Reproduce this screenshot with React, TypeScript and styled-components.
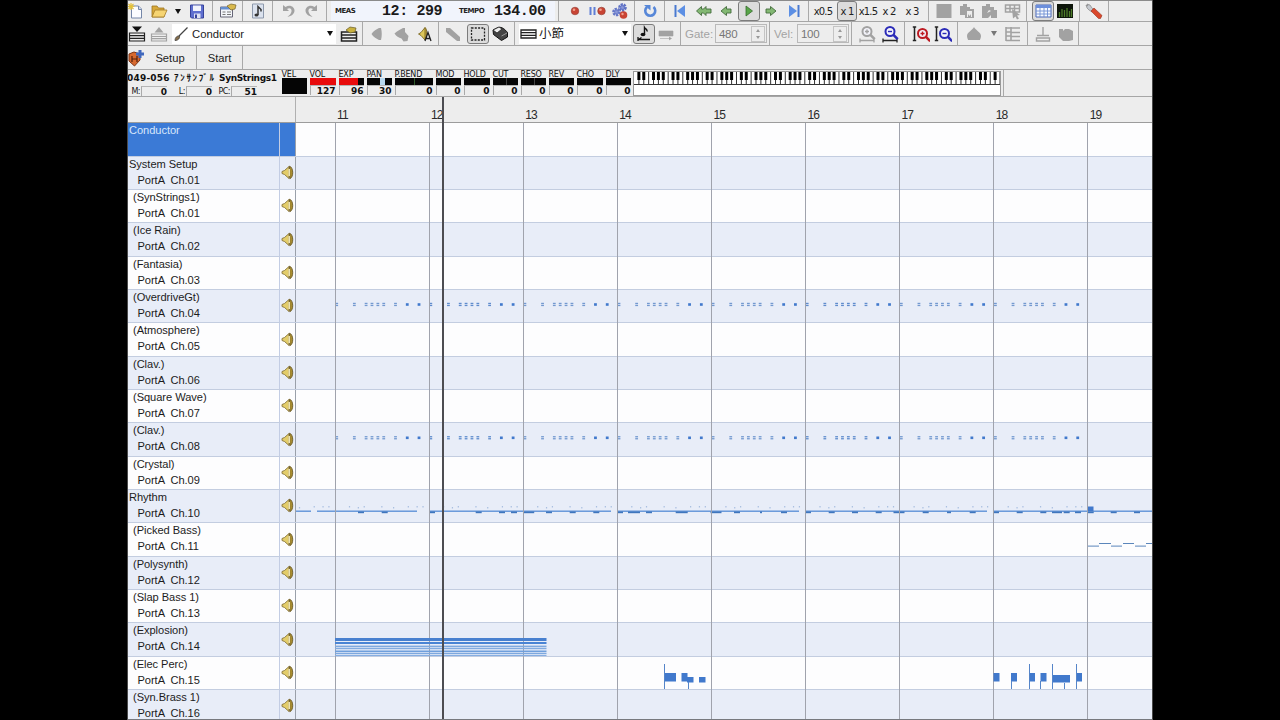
import React from 'react';
import styled, { createGlobalStyle, css } from 'styled-components';

const GlobalStyle = createGlobalStyle`
  * { box-sizing: border-box; }
  body { margin: 0; background: #000; }
`;

const uiFont = '"Liberation Sans", "Noto Sans CJK JP", sans-serif';
const wideFont = '"DejaVu Sans", "Noto Sans CJK JP", sans-serif';

const Screen = styled.div`
  width: 1280px;
  height: 720px;
  overflow: hidden;
  display: flex;
  justify-content: center;
  background: #000;
  font-family: ${uiFont};
  color: #1c1c1c;
`;

const Frame = styled.div`
  position: relative;
`;

const Window = styled.div`
  width: 1026px;
  height: 720px;
  display: flex;
  flex-direction: column;
  background: #ededed;
  border-left: 1px solid #4a4a4a;
  border-right: 1px solid #4a4a4a;
  border-bottom: 1px solid #77797e;
  overflow: hidden;
`;

const Bar = styled.div<{ $h: number; $top?: boolean }>`
  height: ${p => p.$h}px;
  flex: none;
  display: flex;
  align-items: center;
  border-bottom: 1px solid #a6a6a6;
  ${p => p.$top && css`border-top: 1px solid #8b8b8b;`}
`;

const Tool = styled.div<{ $w: number; $on?: boolean; $ml?: number }>`
  width: ${p => p.$w}px;
  height: 20px;
  margin-left: ${p => p.$ml ?? 0}px;
  flex: none;
  display: flex;
  align-items: center;
  justify-content: center;
  ${p => p.$on && css`
    background: #dcdcdc;
    border: 1.5px solid #7c7c7c;
    border-radius: 3px;
  `}
`;

const Sep = styled.div<{ $ml?: number; $mr?: number }>`
  width: 1px;
  height: 100%;
  flex: none;
  margin-left: ${p => p.$ml ?? 0}px;
  margin-right: ${p => p.$mr ?? 0}px;
  background: #a9a9a9;
`;

const Icon = styled.svg`
  width: 18px;
  height: 18px;
  flex: none;
  display: block;
`;

const Speed = styled.span`
  font: 10px ${wideFont};
  letter-spacing: -0.8px;
  white-space: pre;
  color: #222;
`;

const Display = styled.div`
  width: 224px;
  height: 100%;
  background: #f1f4fc;
  display: flex;
  align-items: center;
  flex: none;
  padding-left: 4px;
`;

const DisplayLabel = styled.span<{ $w: number }>`
  width: ${p => p.$w}px;
  font: bold 7px ${wideFont};
  letter-spacing: -0.5px;
  color: #222;
`;

const DisplayValue = styled.span<{ $w: number }>`
  width: ${p => p.$w}px;
  font: bold 15px "Liberation Mono", monospace;
  letter-spacing: -0.4px;
  white-space: pre;
  color: #1a1a1a;
`;

const Combo = styled.div<{ $w: number; $ml?: number }>`
  width: ${p => p.$w}px;
  height: 20px;
  margin-left: ${p => p.$ml ?? 0}px;
  background: #fff;
  display: flex;
  align-items: center;
  flex: none;
  padding: 0 3px 0 1px;
  font-size: 11.3px;
  line-height: 20px;
`;

const ComboText = styled.span<{ $large?: boolean }>`
  flex: 1;
  padding-left: 1px;
  white-space: nowrap;
  ${p => p.$large && css`font-size: 12.5px;`}
`;

const Arrow = styled.i<{ $c?: string }>`
  width: 0;
  height: 0;
  flex: none;
  border: 3.5px solid transparent;
  border-top: 5px solid ${p => p.$c ?? '#111'};
  border-bottom: 0;
`;

const FieldLabel = styled.span<{ $w: number }>`
  width: ${p => p.$w}px;
  padding-left: 4px;
  font-size: 11.5px;
  color: #a3a3a3;
  flex: none;
`;

const Field = styled.div`
  width: 52px;
  height: 19px;
  border: 1px solid #b9b9b9;
  display: flex;
  align-items: center;
  justify-content: space-between;
  padding: 0 1px 0 3px;
  font-size: 11.5px;
  line-height: 16px;
  letter-spacing: -0.3px;
  color: #777;
  flex: none;
`;

const Spinner = styled.div`
  width: 14px;
  height: 16px;
  display: flex;
  flex-direction: column;
  align-items: center;
  justify-content: space-around;
  border: 1px solid #c4c4c4;
`;

const SpinArrow = styled.i<{ $up?: boolean }>`
  border: 2.5px solid transparent;
  ${p => p.$up
    ? css`border-bottom: 3px solid #999; border-top: 0;`
    : css`border-top: 3px solid #999; border-bottom: 0;`}
`;

const TextButton = styled.span<{ $w: number }>`
  width: ${p => p.$w}px;
  text-align: center;
  font-size: 11.2px;
  flex: none;
`;

const Patch = styled.div`
  width: 154px;
  height: 100%;
  display: flex;
  flex-direction: column;
  flex: none;
  color: #111;
`;

const PatchName = styled.div`
  display: flex;
  height: 16px;
  align-items: center;
  margin-left: -1px;
  font: bold 9px/16px ${wideFont};
  white-space: nowrap;
`;

const PatchPart = styled.span<{ $w: number; $ls: number }>`
  width: ${p => p.$w}px;
  letter-spacing: ${p => p.$ls}px;
`;

const PatchValues = styled.div`
  display: flex;
  font: 8px/10px ${wideFont};
`;

const PatchLabel = styled.span<{ $w: number }>`
  width: ${p => p.$w}px;
  text-align: right;
  padding-right: 1px;
  letter-spacing: -0.5px;
  line-height: 11px;
`;

const Value = styled.span<{ $w?: number }>`
  ${p => (p.$w ? css`width: ${p.$w}px;` : '')}
  height: 10px;
  font: bold 9px/10px ${wideFont};
  text-align: right;
  border-left: 1px solid #aaa;
  border-top: 1px solid #b5b5b5;
  color: #111;
`;

const Meters = styled.div`
  display: flex;
  gap: 3px;
  height: 100%;
  padding-top: 1px;
  margin-left: -0.5px;
  flex: none;
`;

const Meter = styled.div<{ $w: number }>`
  width: ${p => p.$w}px;
  display: flex;
  flex-direction: column;
`;

const MeterLabel = styled.span`
  height: 7px;
  font: 8px/8px ${wideFont};
  letter-spacing: -0.2px;
  white-space: nowrap;
  color: #111;
`;

const MeterBar = styled.div<{ $h: number }>`
  height: ${p => p.$h}px;
  background: #050505;
  display: flex;
`;

const MeterFill = styled.div<{ $from: number; $w: number; $c: string }>`
  margin-left: ${p => p.$from}px;
  width: ${p => p.$w}px;
  background: ${p => p.$c};
`;

const Piano = styled.div`
  width: 368px;
  height: 25px;
  margin-left: 2.5px;
  background: #fff;
  border: 1px solid #9a9a9a;
  flex: none;
`;

const Ruler = styled.div`
  height: 26px;
  flex: none;
  display: flex;
  border-bottom: 1px solid #9c9c9c;
`;

const RulerCorner = styled.div`
  width: 168px;
  flex: none;
  border-right: 1px solid #b0b0b0;
`;

const RulerMarks = styled.div`
  display: flex;
  padding-left: 41px;
  overflow: hidden;
`;

const Mark = styled.span`
  width: 94.1px;
  flex: none;
  font-size: 12px;
  line-height: 37px;
  letter-spacing: -0.9px;
  color: #2a2a2a;
`;

const Workspace = styled.div`
  position: relative;
  flex: 1;
  min-height: 0;
  overflow: hidden;
`;

const Track = styled.div<{ $h: number; $alt: boolean }>`
  height: ${p => p.$h}px;
  display: flex;
  background: ${p => (p.$alt ? '#e8edf8' : '#fdfdfe')};
  border-bottom: 1px solid #c3cde0;
`;

const TrackInfo = styled.div<{ $selected?: boolean }>`
  width: 152px;
  height: 100%;
  border-right: 1px solid #c3cde4;
  padding-left: 1px;
  font-size: 11.1px;
  letter-spacing: -0.05px;
  line-height: 15.500px;
  white-space: pre;
  overflow: hidden;
  ${p => p.$selected && css`background: #3b7ad6; color: #d8e6fb;`}
`;

const TrackName = styled.div<{ $inset: boolean }>`
  padding-left: ${p => (p.$inset ? 4 : 0)}px;
`;

const TrackPort = styled.div`
  padding-left: 8.5px;
`;

const TrackMute = styled.div<{ $selected?: boolean }>`
  width: 16px;
  height: 100%;
  display: flex;
  align-items: center;
  justify-content: center;
  padding-bottom: 1px;
  border-right: 1px solid #9aa0aa;
  ${p => p.$selected && css`background: #3b7ad6;`}
`;

const Roll = styled.svg`
  position: absolute;
  left: 167px;
  top: 0;
  display: block;
`;

const Playhead = styled.div`
  position: absolute;
  left: 315px;
  top: 97px;
  width: 1.5px;
  height: 622px;
  background: #4d4d52;
`;

const GRAY = '#a2a2a2';

const icons: Record<string, React.ReactNode> = {
  newFile: <><path d="M4.500 4h7l3 3v9h-10z" fill="#fbfcff" stroke="#7486a8" /><path d="M11.500 4v3.500h3" fill="#cfdaf0" stroke="#7486a8" /><path d="M4 1v7M.5 4.500h7M1.500 2l5 5M6.500 2l-5 5" stroke="#e3c13c" strokeWidth="1.200" /></>,
  open: <><path d="M2 4h5l1.500 2H14v9H2z" fill="#d8a93a" stroke="#9c7420" strokeWidth=".8" /><path d="M2 15l3-7h12l-3 7z" fill="#f6d472" stroke="#a27a26" strokeWidth=".8" /></>,
  save: <><path d="M2.500 3h13v13h-12l-1-1z" fill="#5f6fcf" stroke="#36429a" /><path d="M5 3.500h8v5.500H5z" fill="#f1f3fb" /><path d="M6 11.500h6.500V16H6z" fill="#dfe3f2" /><path d="M7 12.500h2V16H7z" fill="#36429a" /></>,
  props: <><path d="M1.500 5h12v10h-12z" fill="#f4f6fa" stroke="#667" /><path d="M1.500 5h12v2.500h-12z" fill="#668fcf" /><path d="M3.500 10h3M8 10h4M3.500 12.500h3M8 12.500h4" stroke="#777" /><path d="M8 4l4-2 5 1-1 4-4 1z" fill="#d9b94c" stroke="#77642a" strokeWidth=".7" /></>,
  song: <><path d="M3.500 2h11v14h-11z" fill="#dbe2ee" stroke="#8d99ac" /><path d="M9 13V4.500l3 3v2" fill="none" stroke="#333" strokeWidth="1.500" /><ellipse cx="7.500" cy="13" rx="2" ry="1.600" fill="#333" /></>,
  undo: <path d="M3 3v6h6L7 7c3-2 5 0 4.500 2.500S9 13.500 7.500 15c4-1 7-3 7-6.500S10 2 5.500 5z" fill={GRAY} />,
  redo: <path d="M15 3v6H9l2-2c-3-2-5 0-4.500 2.500S9 13.500 10.500 15c-4-1-7-3-7-6.500S8 2 12.500 5z" fill={GRAY} />,
  rec: <><circle cx="9" cy="9" r="3.800" fill="#c94434" stroke="#8f3a30" strokeWidth=".6" /><circle cx="8" cy="7.800" r="1.300" fill="#f0a08c" /></>,
  pauseRec: <><path d="M1.500 5v8M5.500 5v8" stroke="#5f7fd6" strokeWidth="2" /><circle cx="12.500" cy="9" r="3.800" fill="#c94434" stroke="#8f3a30" strokeWidth=".6" /><circle cx="11.500" cy="7.800" r="1.300" fill="#f0a08c" /></>,
  gearRec: <><circle cx="11.500" cy="5.500" r="2.800" fill="#8b99d8" stroke="#5d70c4" strokeWidth="3" strokeDasharray="2 .8" /><circle cx="5.500" cy="10" r="2.800" fill="#8b99d8" stroke="#6678c8" strokeWidth="3" strokeDasharray="2 .8" /><circle cx="12.500" cy="13" r="3.800" fill="#c94434" /><circle cx="11.500" cy="12" r="1.200" fill="#f0a08c" /></>,
  loop: <><path d="M12.500 5a5 5 0 1 1-6.500 0" fill="none" stroke="#5787d8" strokeWidth="2.600" /><path d="M3 3h6.500v5.500z" fill="#5787d8" /></>,
  first: <><path d="M4.500 3v12" stroke="#4a7ad0" strokeWidth="2" /><path d="M14 3v12L6 9z" fill="#5c8fe4" /></>,
  last: <><path d="M13.500 3v12" stroke="#4a7ad0" strokeWidth="2" /><path d="M4 3v12l8-6z" fill="#5c8fe4" /></>,
  rewind: <path d="M1.500 9l5-4.500V7h2L11 4.500V7h5v4h-5v2.500L8.500 11h-2v2.500z" fill="#83b873" stroke="#436b3c" strokeWidth=".9" />,
  back: <path d="M4 9l5.500-4.500V7H14v4H9.500v2.500z" fill="#83b873" stroke="#436b3c" strokeWidth=".9" />,
  fwd: <path d="M14 9L8.500 4.500V7H4v4h4.500v2.500z" fill="#83b873" stroke="#436b3c" strokeWidth=".9" />,
  play: <path d="M6 4v10l6.500-5z" fill="#58a548" stroke="#356c2c" strokeWidth=".8" />,
  block: <path d="M1.500 2h15v14h-15z" fill={GRAY} />,
  paste1: <path d="M2 4h3V2h4v3h3v2h4v9H7v-3H2zM9 9v6h1v-3l1.500 2 1.500-2v3h1V9" fill={GRAY} fillRule="evenodd" />,
  paste2: <path d="M2 4h4V2h4v3h4v3h3v8h-6v-3l-3 3H2zM9 8l-2 3 4-2" fill={GRAY} fillRule="evenodd" />,
  pickTable: <><path d="M1.500 3h14v7h-14zM1.500 6.500h14M6 3v7M10.500 3v7" fill="none" stroke={GRAY} strokeWidth="1.500" /><path d="M8 7l8 6-3 .5 2 3-2 1-1.500-3-2.500 2z" fill={GRAY} /></>,
  table: <><path d="M2 3h15v12H2z" fill="#f7faff" stroke="#4966b8" /><path d="M2 3h15v3H2z" fill="#6c8fdc" /><path d="M2 9h15M2 12h15M6 6v9M10 6v9M13.500 6v9" stroke="#6f90d2" strokeWidth=".9" /></>,
  levels: <><path d="M1 2h16v14H1z" fill="#0d150b" /><path d="M3.500 15v-5M6 15V7M8.500 15V8M11 15V6M13.500 15V9M15.500 15V7" stroke="#4d7c2a" strokeWidth="1.300" /></>,
  wrench: <><path d="M2 2l3 1 2 3 2 2-2 2-3-2-2-2-1-3 2 1z" fill="#c5c9cf" stroke="#777" strokeWidth=".6" /><path d="M9 6l8 7.500-1.500 3h-2L6 9z" fill="#d9482c" stroke="#92301e" strokeWidth=".6" /></>,
  listDown: <><path d="M4 1.500h10l-5 5.500z" fill="#111" /><path d="M1.500 8h15v8h-15zM1.500 10.700h15M1.500 13.400h15" fill="none" stroke="#222" strokeWidth="1.200" /></>,
  listUp: <><path d="M4.500 7.500h9L9 2z" fill={GRAY} /><path d="M1.500 9h15v7h-15zM1.500 11.500h15M1.500 13.700h15" fill="none" stroke={GRAY} strokeWidth="1.200" /></>,
  baton: <><path d="M6 11l8.500-8.500" stroke="#444" strokeWidth="1.200" /><path d="M2 15.500c0-3 2-5 4.500-4.500.5 2-1 4.500-4.500 4.500z" fill="#866f4c" stroke="#333" strokeWidth=".7" /></>,
  listProps: <><path d="M1.500 7h15v9h-15zM1.500 10h15M1.500 13h15" fill="#eee" stroke="#222" strokeWidth="1.500" /><path d="M6 5l4-3 6 1-1 4-5 1z" fill="#c9b13e" stroke="#665a26" strokeWidth=".7" /></>,
  mute: <path d="M2.500 9C4 6 8 4 10 3h2c1 4 1 8 0 12h-2c-2-1-6-3-7.500-6z" fill={GRAY} />,
  mute2: <path d="M1.500 8.500C4 6 8 4 10 3h2v4l3.500 4-1 5-4 .5-2-3c-3-1-5-2-7-5z" fill={GRAY} />,
  soloA: <><path d="M2.500 9L5 7.500 9 2.500V15L5 10.500z" fill="#dcc75a" stroke="#6f5c16" strokeWidth=".8" /><path d="M9 2.500c2.500 2 2.500 9 0 12" fill="#a88d31" stroke="#6f5c16" strokeWidth=".8" /><path d="M9 16l3-8.500 3 8.500M10 13.500h4" fill="none" stroke="#222" strokeWidth="1.300" /></>,
  pencil: <path d="M2 3h4l10 9v4h-3L2 7z" fill={GRAY} />,
  select: <path d="M2.500 3h13v12h-13z" fill="none" stroke="#222" strokeWidth="1.300" strokeDasharray="2 1.300" />,
  eraser: <><path d="M2 5l5-2.500c4-1 7 2 9.500 5V12l-6 3.500-8-6z" fill="#444" stroke="#111" /><path d="M2 5l6-3 3 2-5 4z" fill="#eee" stroke="#222" strokeWidth=".8" /><path d="M10.500 11l5.500-3" stroke="#999" /></>,
  bars: <path d="M1 5h15v8H1zM1 7.700h15M1 10.300h15" fill="none" stroke="#222" strokeWidth="1.300" />,
  note: <><path d="M9.500 9V2.500c1 1.800 3 1.500 2.500 4" fill="none" stroke="#111" strokeWidth="1.400" /><ellipse cx="8" cy="9.500" rx="2.400" ry="1.700" fill="#111" /><path d="M3 12v4M3 14.500h12M3.500 14.500l3-2" stroke="#111" strokeWidth="1.300" /></>,
  gateBar: <path d="M2 6h14v5H2zM3 13.500h11M12 12l2.500 1.500L12 15" fill={GRAY} stroke={GRAY} strokeWidth=".6" />,
  drop: <path d="M9 2c1 3 7 5 7 9 0 2-1 3-1 4H3c0-1-1-2-1-4 0-4 6-6 7-9z" fill={GRAY} />,
  grid: <path d="M2 2v14M7 2v14M2 3h14M2 7h5M7 7.500h9M2 11h5M7 11.500h9M2 15.500h14" fill="none" stroke={GRAY} strokeWidth="1.600" />,
  insert: <path d="M9 2v8M3 10.500h12M2.500 13h13v3h-13z" fill="none" stroke={GRAY} strokeWidth="1.400" />,
  hand: <path d="M2 4h4v2l2-2h4l4 2v9l-4 1H6l-4-4z" fill={GRAY} />,
  badge: <><path d="M2 5l5-2 6 2v6l-5.500 6L2 12z" fill="#d7692f" stroke="#7c3314" /><path d="M5 7v6M10 7v6M5 10h5" stroke="#52200e" strokeWidth="1.200" /><path d="M13 1v8M9 5h8" stroke="#3f67bd" strokeWidth="3" /></>,
};

function I({ n }: { n: string }) {
  return <Icon viewBox="0 0 18 18">{icons[n]}</Icon>;
}

function Magnifier({ color, plus, vertical, dark = '#222' }: { color: string; plus?: boolean; vertical?: boolean; dark?: string }) {
  const cx = vertical ? 10.5 : 9;
  const cy = vertical ? 8.5 : 6.5;
  return (
    <Icon viewBox="0 0 18 18">
      {vertical
        ? <path d="M2.500 2v13.500M.8 2h3.400M.8 15.500h3.400" stroke={dark} strokeWidth="1.500" fill="none" />
        : <path d="M2 15.500h14M2 13.500v4M16 13.500v4" stroke={dark} strokeWidth="1.300" fill="none" />}
      <circle cx={cx} cy={cy} r="4.500" fill="#f3f3fa" stroke={color} strokeWidth="2" />
      <path d={`M${cx + 3.2} ${cy + 3.2}l4.500 4.500`} stroke={color} strokeWidth="2.600" />
      <path d={`M${cx - 2} ${cy}h4${plus ? `M${cx} ${cy - 2}v4` : ''}`} stroke={color} strokeWidth="1.400" />
    </Icon>
  );
}

function Speaker() {
  return (
    <svg width="13" height="15" viewBox="0 0 13 15">
      <path d="M1 6.500L3.500 5.500 8 1.500v12L3.500 9.500 1 8.500z" fill="#e3cd6a" stroke="#86733a" strokeWidth=".9" />
      <path d="M8.500 1.200c4 1 4.500 11 .3 12.500z" fill="#a88d31" stroke="#6b5a26" strokeWidth=".9" />
      <path d="M8.200 4v7" stroke="#fff7c8" strokeWidth="1.300" />
    </svg>
  );
}

const NumberField = ({ value }: { value: string }) => (
  <Field>{value}<Spinner><SpinArrow $up /><SpinArrow /></Spinner></Field>
);

type MeterData = { label: string; w: number; value: string; from?: number; fill?: number; color?: string };
const meters: MeterData[] = [
  { label: 'VOL', w: 26, value: '127', from: 0, fill: 26, color: '#e80c0c' },
  { label: 'EXP', w: 25, value: '96', from: 0, fill: 19, color: '#e80c0c' },
  { label: 'PAN', w: 25, value: '30', from: 13, fill: 5, color: '#b8d8ee' },
  { label: 'P.BEND', w: 38, value: '0', from: 19, fill: 1, color: '#2f5a2b' },
  { label: 'MOD', w: 25, value: '0' },
  { label: 'HOLD', w: 26, value: '0' },
  { label: 'CUT', w: 25, value: '0', from: 13, fill: 1, color: '#444' },
  { label: 'RESO', w: 25, value: '0', from: 13, fill: 1, color: '#444' },
  { label: 'REV', w: 25, value: '0' },
  { label: 'CHO', w: 26, value: '0' },
  { label: 'DLY', w: 25, value: '0' },
];

const KEY = 366 / 75;

function Keyboard() {
  const white = Array.from({ length: 75 }, (_, i) => i);
  return (
    <svg width="366" height="23" style={{ display: 'block' }}>
      {white.map(i => <rect key={i} x={(i + 1) * KEY - 0.5} y="0" width="1" height="13" fill="#333" />)}
      {white.filter(i => ![2, 6].includes(i % 7) && i < 74).map(i => (
        <rect key={i} x={(i + 1) * KEY - 1.5} y="0" width="3" height="8" fill="#000" />
      ))}
      <rect x="0" y="12" width="366" height="1" fill="#333" />
    </svg>
  );
}

const tracks: [string, string][] = [
  ['Conductor', ''],
  ['System Setup', '01'],
  ['(SynStrings1)', '01'],
  ['(Ice Rain)', '02'],
  ['(Fantasia)', '03'],
  ['(OverdriveGt)', '04'],
  ['(Atmosphere)', '05'],
  ['(Clav.)', '06'],
  ['(Square Wave)', '07'],
  ['(Clav.)', '08'],
  ['(Crystal)', '09'],
  ['Rhythm', '10'],
  ['(Picked Bass)', '11'],
  ['(Polysynth)', '12'],
  ['(Slap Bass 1)', '13'],
  ['(Explosion)', '14'],
  ['(Elec Perc)', '15'],
  ['(Syn.Brass 1)', '16'],
];
const ROW = 33.33;
const rowTop = (i: number) => Math.round(i * ROW + (i ? 0.4 : 0));

const MEASURE = 94.1;
const steps = [0, 3, 5, 6, 7, 8, 10, 12, 14];
const BLUE = '#4179cc';

const beatLines: [number, number][] = [[1, 16], [22, 122], [134, 316], [322, 504], [510, 692], [698, 857]];
const kicks: [number, number][] = [
  [361, 6], [384.7, 6], [432, 6], [478.7, 6], [502, 6], [514, 6], [528.7, 11], [549, 6], [572.7, 6], [596.3, 6],
  [620, 6], [634, 12], [649, 6], [681.7, 12], [716, 11], [737, 6], [761, 2], [784, 6], [808, 6], [831.7, 6],
  [855, 6], [878.7, 6], [899, 11], [925.7, 6], [949, 4], [972.7, 6], [996, 6], [1019.7, 6], [1043.3, 6],
  [1057, 10], [1066.7, 6], [1078, 6], [1090.7, 6], [1113.7, 6], [1137, 6],
];
const hats = [1.5, 3, 4, 7, 9, 11.5, 13, 14];
const bassNotes: [number, number, boolean][] = [
  [1088, 11, true], [1099, 12, false], [1111, 11, true], [1123, 11, false], [1135, 11, true], [1146, 7, false],
];
const explosion: [number, number, string][] = [
  [638, 3, '#4880cf'], [642, 2, '#4a84d4'], [645.6, 1.5, '#7fa9de'], [647.8, 1.4, '#82abe0'],
  [650.5, 1.6, '#6f9fdc'], [652.8, 1.4, '#7da8de'], [655, 1, '#86aee2'],
];
const percBlocks: [number, number, number, number][] = [
  [664.5, 673, 11.5, 8.5], [681.5, 673, 6, 8.5], [687, 677, 6.5, 5.5], [699, 677, 6.5, 5.5],
  [993.5, 673, 6, 8.5], [1011, 673, 6, 8.5], [1029, 673, 6, 8.5], [1040.5, 673, 6, 8.5],
  [1052.5, 675, 17.5, 7.5], [1076, 673, 6, 8.5],
];
const percTicks: [number, number, number][] = [
  [664, 664, 25], [688, 682, 7], [1011, 681, 8], [1029, 664, 25], [1040, 681, 8], [1052, 664, 25], [1064, 683, 6], [1076, 664, 25],
];

function PianoRoll() {
  return (
    <Roll width="857" height="597" viewBox="0 0 857 597">
      {[302.8, 436.1].map(y => Array.from({ length: 8 }, (_, m) => steps.map((s, k) => {
        const x = 40 + m * MEASURE + s * 5.88 + 0.3;
        const solid = k > 6;
        return (
          <g key={`${y}-${m}-${s}`} fill={solid ? BLUE : m % 4 === 1 ? '#5f8ccd' : '#7399d0'}>
            <rect x={x} y={y - 123 + (solid ? 0.4 : 0)} width="2.8" height={solid ? 2.6 : 1.3} />
            {!solid && <rect x={x} y={y - 121} width="2.8" height="1.3" />}
          </g>
        );
      })))}
      {Array.from({ length: 9 }, (_, m) => hats.map(s => (
        <rect key={`${m}-${s}`} x={m * MEASURE - 49 + s * 5.88} y={383 + (s % 3 ? 0 : 1)} width="1.2" height="1.5" fill="#a9bfe0" />
      )))}
      {beatLines.map(([a, b]) => <rect key={a} x={a} y="387.5" width={b - a} height="1.4" fill="#5f92d8" />)}
      {kicks.map(([x, w]) => <rect key={x} x={x - 295 - w / 2} y="388.5" width={w} height="1.7" fill="#3f76bd" />)}
      <rect x="793" y="383.5" width="5.5" height="4.5" fill={BLUE} />
      {bassNotes.map(([x, w, low]) => (
        <rect key={x} x={x - 295} y={low ? 422.6 : 420} width={w} height="1" fill="#5b86bb" />
      ))}
      {Array.from({ length: 9 }, (_, i) => (
        <rect key={i} x={Math.floor(40.1 + i * MEASURE)} y="0" width="1" height="597" fill="#a0a3ad" />
      ))}
      {explosion.map(([y, h, c]) => <rect key={y} x="40" y={y - 123} width="211.5" height={h} fill={c} />)}
      {percBlocks.map(([x, y, w, h]) => <rect key={x} x={x - 295} y={y - 123} width={w} height={h} fill={BLUE} />)}
      {percTicks.map(([x, y, h]) => <rect key={x} x={x - 295} y={y - 123} width="1" height={h} fill="#5585c9" />)}
    </Roll>
  );
}

export default function App() {
  return (
    <Screen>
      <GlobalStyle />
      <Frame>
        <Window>
          <Bar $h={22} $top>
            <Tool $w={16}><I n="newFile" /></Tool>
            <Tool $w={30}><I n="open" /></Tool>
            <Tool $w={8}><Arrow /></Tool>
            <Tool $w={30}><I n="save" /></Tool>
            <Sep />
            <Tool $w={29}><I n="props" /></Tool>
            <Sep />
            <Tool $w={29}><I n="song" /></Tool>
            <Sep />
            <Tool $w={31}><I n="undo" /></Tool>
            <Tool $w={14}><I n="redo" /></Tool>
            <Sep $ml={8} $mr={4} />
            <Display>
              <DisplayLabel $w={47}>MEAS</DisplayLabel>
              <DisplayValue $w={77}>12: 299</DisplayValue>
              <DisplayLabel $w={35}>TEMPO</DisplayLabel>
              <DisplayValue $w={57}>134.00</DisplayValue>
            </Display>
            <Sep $ml={3} />
            <Tool $w={32}><I n="rec" /></Tool>
            <Tool $w={14}><I n="pauseRec" /></Tool>
            <Tool $w={29}><I n="gearRec" /></Tool>
            <Sep />
            <Tool $w={29}><I n="loop" /></Tool>
            <Sep />
            <Tool $w={29}><I n="first" /></Tool>
            <Tool $w={19}><I n="rewind" /></Tool>
            <Tool $w={25}><I n="back" /></Tool>
            <Tool $w={22} $on><I n="play" /></Tool>
            <Tool $w={22}><I n="fwd" /></Tool>
            <Tool $w={23}><I n="last" /></Tool>
            <Sep $ml={3} />
            <Tool $w={28}><Speed>x0.5</Speed></Tool>
            <Tool $w={20} $on><Speed>x 1</Speed></Tool>
            <Tool $w={22}><Speed>x1.5</Speed></Tool>
            <Tool $w={20}><Speed>x 2</Speed></Tool>
            <Tool $w={26}><Speed>x 3</Speed></Tool>
            <Sep $ml={3} />
            <Tool $w={30}><I n="block" /></Tool>
            <Tool $w={15}><I n="paste1" /></Tool>
            <Tool $w={30}><I n="paste2" /></Tool>
            <Tool $w={17}><I n="pickTable" /></Tool>
            <Sep $ml={5} />
            <Tool $w={22} $ml={5} $on><I n="table" /></Tool>
            <Tool $w={22}><I n="levels" /></Tool>
            <Sep $ml={3} />
            <Tool $w={28}><I n="wrench" /></Tool>
            <Sep />
          </Bar>
          <Bar $h={24}>
            <Tool $w={18}><I n="listDown" /></Tool>
            <Tool $w={26}><I n="listUp" /></Tool>
            <Combo $w={164}>
              <I n="baton" />
              <ComboText>Conductor</ComboText>
              <Arrow />
            </Combo>
            <Tool $w={26}><I n="listProps" /></Tool>
            <Sep />
            <Tool $w={30}><I n="mute" /></Tool>
            <Tool $w={18}><I n="mute2" /></Tool>
            <Tool $w={27}><I n="soloA" /></Tool>
            <Sep />
            <Tool $w={28}><I n="pencil" /></Tool>
            <Tool $w={22} $on><I n="select" /></Tool>
            <Tool $w={22}><I n="eraser" /></Tool>
            <Sep $ml={3} />
            <Combo $w={112} $ml={4}>
              <I n="bars" />
              <ComboText $large>小節</ComboText>
              <Arrow />
            </Combo>
            <Tool $w={22} $ml={2} $on><I n="note" /></Tool>
            <Tool $w={22}><I n="gateBar" /></Tool>
            <Sep $ml={3} />
            <FieldLabel $w={34}>Gate:</FieldLabel>
            <NumberField value="480" />
            <Sep $ml={2} />
            <FieldLabel $w={27}>Vel:</FieldLabel>
            <NumberField value="100" />
            <Sep $ml={2} />
            <Tool $w={30}><Magnifier color={GRAY} dark={GRAY} plus /></Tool>
            <Tool $w={16}><Magnifier color="#2b2bb8" /></Tool>
            <Sep $ml={6} />
            <Tool $w={32}><Magnifier color="#bd1a22" plus vertical /></Tool>
            <Tool $w={12}><Magnifier color="#2b2bb8" vertical /></Tool>
            <Sep $ml={8} />
            <Tool $w={32}><I n="drop" /></Tool>
            <Tool $w={8}><Arrow $c="#777" /></Tool>
            <Tool $w={29}><I n="grid" /></Tool>
            <Sep />
            <Tool $w={30}><I n="insert" /></Tool>
            <Tool $w={16}><I n="hand" /></Tool>
            <Sep $ml={4} />
          </Bar>
          <Bar $h={24}>
            <Tool $w={16}><I n="badge" /></Tool>
            <TextButton $w={52}>Setup</TextButton>
            <Sep />
            <TextButton $w={45}>Start</TextButton>
            <Sep />
          </Bar>
          <Bar $h={27}>
            <Patch>
              <PatchName>
                <PatchPart $w={47} $ls={0.2}>049-056</PatchPart>
                <PatchPart $w={45} $ls={1.7}>ｱﾝｻﾝﾌﾞﾙ</PatchPart>
                <PatchPart $w={60} $ls={-0.35}>SynStrings1</PatchPart>
              </PatchName>
              <PatchValues>
                <PatchLabel $w={13}>M:</PatchLabel><Value $w={26}>0</Value>
                <PatchLabel $w={19}>L:</PatchLabel><Value $w={26}>0</Value>
                <PatchLabel $w={19}>PC:</PatchLabel><Value $w={26}>51</Value>
              </PatchValues>
            </Patch>
            <Meters>
              <Meter $w={25}><MeterLabel>VEL</MeterLabel><MeterBar $h={16} /></Meter>
              {meters.map(m => (
                <Meter key={m.label} $w={m.w}>
                  <MeterLabel>{m.label}</MeterLabel>
                  <MeterBar $h={7}>
                    {m.color && <MeterFill $from={m.from ?? 0} $w={m.fill ?? 0} $c={m.color} />}
                  </MeterBar>
                  <Value>{m.value}</Value>
                </Meter>
              ))}
            </Meters>
            <Piano><Keyboard /></Piano>
            <Sep $ml={2} />
          </Bar>
          <Ruler>
            <RulerCorner />
            <RulerMarks>
              {[11, 12, 13, 14, 15, 16, 17, 18, 19].map(n => <Mark key={n}>{n}</Mark>)}
            </RulerMarks>
          </Ruler>
          <Workspace>
            {tracks.map(([name, ch], i) => (
              <Track key={i} $h={rowTop(i + 1) - rowTop(i)} $alt={i % 2 === 1}>
                <TrackInfo $selected={i === 0}>
                  <TrackName $inset={name.startsWith('(')}>{name}</TrackName>
                  {ch && <TrackPort>{`PortA  Ch.${ch}`}</TrackPort>}
                </TrackInfo>
                <TrackMute $selected={i === 0}>{ch && <Speaker />}</TrackMute>
              </Track>
            ))}
            <PianoRoll />
          </Workspace>
        </Window>
        <Playhead />
      </Frame>
    </Screen>
  );
}
